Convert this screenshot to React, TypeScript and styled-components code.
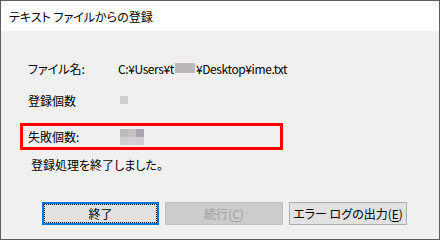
import React from "react";
import styled, { createGlobalStyle } from "styled-components";

const Global = createGlobalStyle`
  html, body { margin: 0; padding: 0; background: #ffffff; }
  body {
    font-family: "Noto Sans CJK JP", "Noto Sans", sans-serif;
    font-feature-settings: "palt";
  }
`;

const Window = styled.div`
  width: 440px;
  height: 240px;
  box-sizing: border-box;
  border: 1px solid #5c5c5c;
  display: flex;
  flex-direction: column;
  background: #f0f0f0;
  overflow: hidden;
`;

const TitleBar = styled.div`
  height: 30px;
  flex: none;
  background: #ffffff;
  display: flex;
  align-items: center;
  padding-left: 8px;
  font-size: 12px;
  color: #000;
`;

const Body = styled.div`
  flex: 1;
  display: flex;
  flex-direction: column;
  padding: 27px 0 0 19px;
  font-size: 12px;
  color: #000;
`;

const Row = styled.div<{ $mt?: number }>`
  display: grid;
  grid-template-columns: 90px auto;
  align-items: center;
  height: 20px;
  margin-top: ${(p) => p.$mt ?? 0}px;
  padding-left: 8px;
`;

const FailBox = styled.div`
  margin-top: 13px;
  width: 263px;
  height: 27px;
  box-sizing: border-box;
  border: 3px solid #ff0000;
  display: grid;
  grid-template-columns: 92px auto;
  align-items: center;
  padding-left: 5px;
`;

const Label = styled.span``;

const Value = styled.span<{ $tight?: boolean }>`
  display: flex;
  align-items: center;
  white-space: nowrap;
  letter-spacing: ${(p) => (p.$tight ? "-0.4px" : "0")};
`;

const Blur = styled.span`
  display: inline-block;
  width: 20px;
  height: 10px;
  margin: 0 1px;
  background: #bdb6b6;
`;

const Square = styled.span`
  display: inline-block;
  width: 8px;
  height: 8px;
  margin-left: 2px;
  background: #cfcfcb;
`;

const Message = styled.div`
  margin-top: 4px;
  height: 20px;
  display: flex;
  align-items: center;
  padding-left: 11px;
`;

const ButtonBar = styled.div`
  margin-top: 28px;
  display: flex;
  gap: 6px;
  padding-left: 22px;
`;

const Button = styled.div<{ $focus?: boolean; $disabled?: boolean; $w: number }>`
  width: ${(p) => p.$w}px;
  height: 23px;
  box-sizing: border-box;
  display: flex;
  align-items: center;
  justify-content: center;
  font-size: 12px;
  background: ${(p) => (p.$disabled ? "#cccccc" : "#e1e1e1")};
  color: ${(p) => (p.$disabled ? "#9d9d9d" : "#000")};
  border: ${(p) =>
    p.$focus ? "2px solid #0078d7" : p.$disabled ? "1px solid #bfbfbf" : "1px solid #adadad"};
  padding: ${(p) => (p.$focus ? "0" : "1px")};
`;

const FocusRect = styled.span`
  flex: 1;
  align-self: stretch;
  border: 1px dotted #000;
  display: flex;
  align-items: center;
  justify-content: center;
`;

const U = styled.span`
  text-decoration: underline;
  text-underline-offset: 2px;
`;

const Mosaic = () => (
  <svg width="24" height="16" viewBox="0 0 24 16">
    <rect x="0" y="0" width="8" height="8" fill="#bcb8bc" />
    <rect x="8" y="0" width="8" height="8" fill="#c4c0c4" />
    <rect x="16" y="0" width="8" height="8" fill="#a8a4b4" />
    <rect x="0" y="8" width="8" height="8" fill="#d2cecf" />
    <rect x="8" y="8" width="8" height="8" fill="#d6d2d4" />
    <rect x="16" y="8" width="8" height="8" fill="#d0ccd2" />
  </svg>
);

export default function App() {
  return (
    <>
      <Global />
      <Window>
        <TitleBar>テキスト ファイルからの登録</TitleBar>
        <Body>
          <Row>
            <Label>ファイル名:</Label>
            <Value $tight>
              C:¥Users¥t<Blur />¥Desktop¥ime.txt
            </Value>
          </Row>
          <Row $mt={12}>
            <Label>登録個数</Label>
            <Value>
              <Square />
            </Value>
          </Row>
          <FailBox>
            <Label>失敗個数:</Label>
            <Value>
              <Mosaic />
            </Value>
          </FailBox>
          <Message>登録処理を終了しました。</Message>
          <ButtonBar>
            <Button $focus $w={117}>
              <FocusRect>終了</FocusRect>
            </Button>
            <Button $disabled $w={118}>
              続行(<U>C</U>)
            </Button>
            <Button $w={118}>
              エラー ログの出力(<U>E</U>)
            </Button>
          </ButtonBar>
        </Body>
      </Window>
    </>
  );
}
